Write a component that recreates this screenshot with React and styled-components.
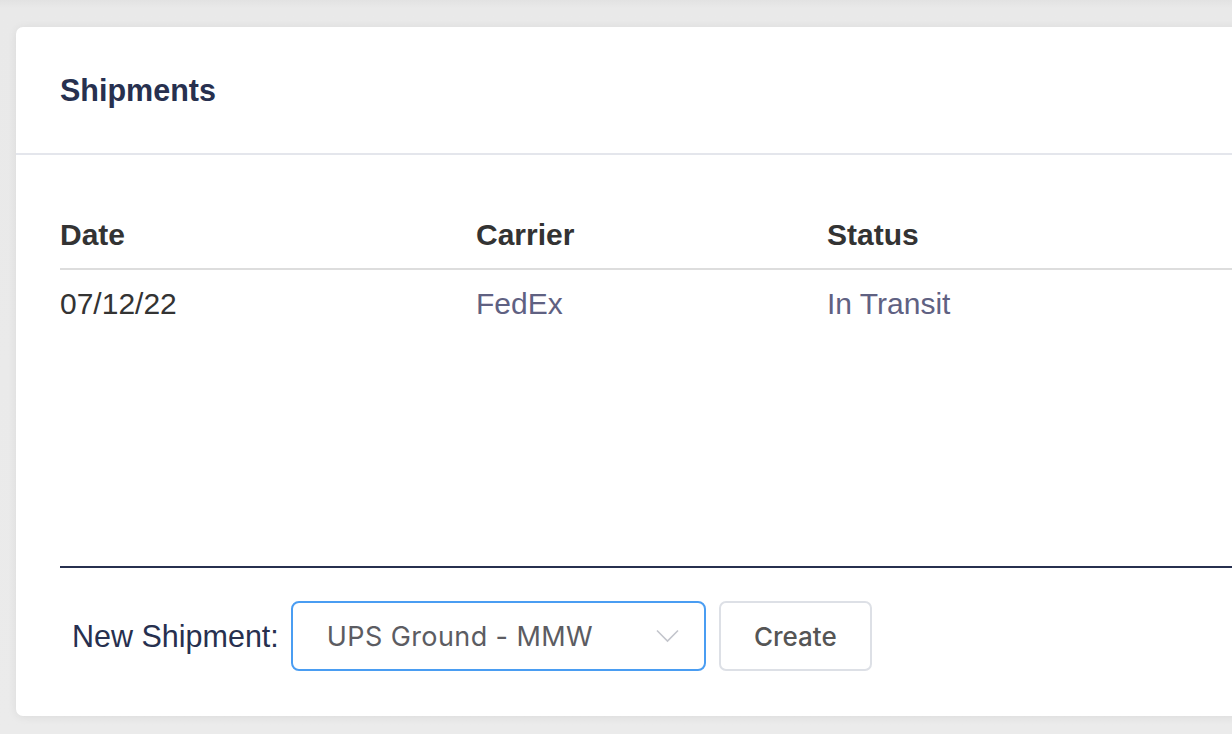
import React, { useState } from 'react';
import styled, { createGlobalStyle } from 'styled-components';

const GlobalStyle = createGlobalStyle`
  html, body {
    margin: 0;
    padding: 0;
    overflow: hidden;
  }
  body {
    background: linear-gradient(#e2e2e2 0px, #e9e9e9 8px, #ebebeb 100%);
    font-family: "Liberation Sans", Arial, sans-serif;
    height: 734px;
  }
`;

const Page = styled.div`
  padding: 27px 0 0 16px;
`;

const Card = styled.section`
  width: 1260px;
  background: #fff;
  border-radius: 7px;
  box-shadow: 0 1px 10px rgba(0, 0, 0, 0.07);
`;

const CardHeader = styled.header`
  height: 128px;
  padding: 0 44px;
  display: flex;
  align-items: center;
  border-bottom: 2px solid #e4e6ec;
  box-sizing: border-box;
`;

const Title = styled.h2`
  margin: 0;
  font-size: 30.5px;
  font-weight: 700;
  color: #27304f;
`;

const Body = styled.div`
  height: 413px;
  box-sizing: border-box;
  padding-top: 63px;
  margin-left: 44px;
  border-bottom: 2px solid #27304f;
`;

const Table = styled.table`
  width: 100%;
  border-collapse: collapse;
  font-size: 30px;
`;

const Th = styled.th`
  text-align: left;
  font-weight: 700;
  color: #333;
  padding: 0 0 16px;
  line-height: 34px;
  border-bottom: 2px solid #dddddd;
  width: ${props => props.$w || 'auto'};
`;

const Td = styled.td`
  padding: 17px 0;
  line-height: 34px;
  color: ${props => (props.$muted ? '#5f6182' : '#333')};
`;

const Footer = styled.footer`
  display: flex;
  align-items: center;
  padding: 33px 0 45px 56px;
`;

const Label = styled.label`
  font-size: 30.5px;
  color: #27304f;
  margin-right: 12px;
`;

const SelectBox = styled.div`
  position: relative;
  width: 415px;
  height: 70px;
  box-sizing: border-box;
  border: 2px solid #4a9df2;
  border-radius: 8px;
  display: flex;
  align-items: center;
  padding: 0 0 0 34px;
  font-family: Inter, "Liberation Sans", sans-serif;
  font-size: 27px;
  letter-spacing: 0.4px;
  color: #5c5c62;
  margin-right: 13px;
`;

const Chevron = styled.svg`
  position: absolute;
  right: 25px;
  top: 26px;
`;

const Button = styled.button`
  width: 153px;
  height: 70px;
  box-sizing: border-box;
  background: #fff;
  border: 2px solid #dde0e6;
  border-radius: 7px;
  font-family: Inter, "Liberation Sans", sans-serif;
  font-size: 26px;
  font-weight: 500;
  color: #555;
  cursor: pointer;
`;

const shipments = [{ date: '07/12/22', carrier: 'FedEx', status: 'In Transit' }];

export default function App() {
  const [carrier] = useState('UPS Ground - MMW');

  return (
    <Page>
      <GlobalStyle />
      <Card>
        <CardHeader>
          <Title>Shipments</Title>
        </CardHeader>
        <Body>
          <Table>
            <thead>
              <tr>
                <Th $w="416px">Date</Th>
                <Th $w="351px">Carrier</Th>
                <Th>Status</Th>
              </tr>
            </thead>
            <tbody>
              {shipments.map(s => (
                <tr key={s.date + s.carrier}>
                  <Td>{s.date}</Td>
                  <Td $muted>{s.carrier}</Td>
                  <Td $muted>{s.status}</Td>
                </tr>
              ))}
            </tbody>
          </Table>
        </Body>
        <Footer>
          <Label>New Shipment:</Label>
          <SelectBox>
            {carrier}
            <Chevron width="23" height="14" viewBox="0 0 23 14" fill="none">
              <path d="M1 1.5 L11.5 12 L22 1.5" stroke="#c3c5cc" strokeWidth="1.6" />
            </Chevron>
          </SelectBox>
          <Button>Create</Button>
        </Footer>
      </Card>
    </Page>
  );
}
